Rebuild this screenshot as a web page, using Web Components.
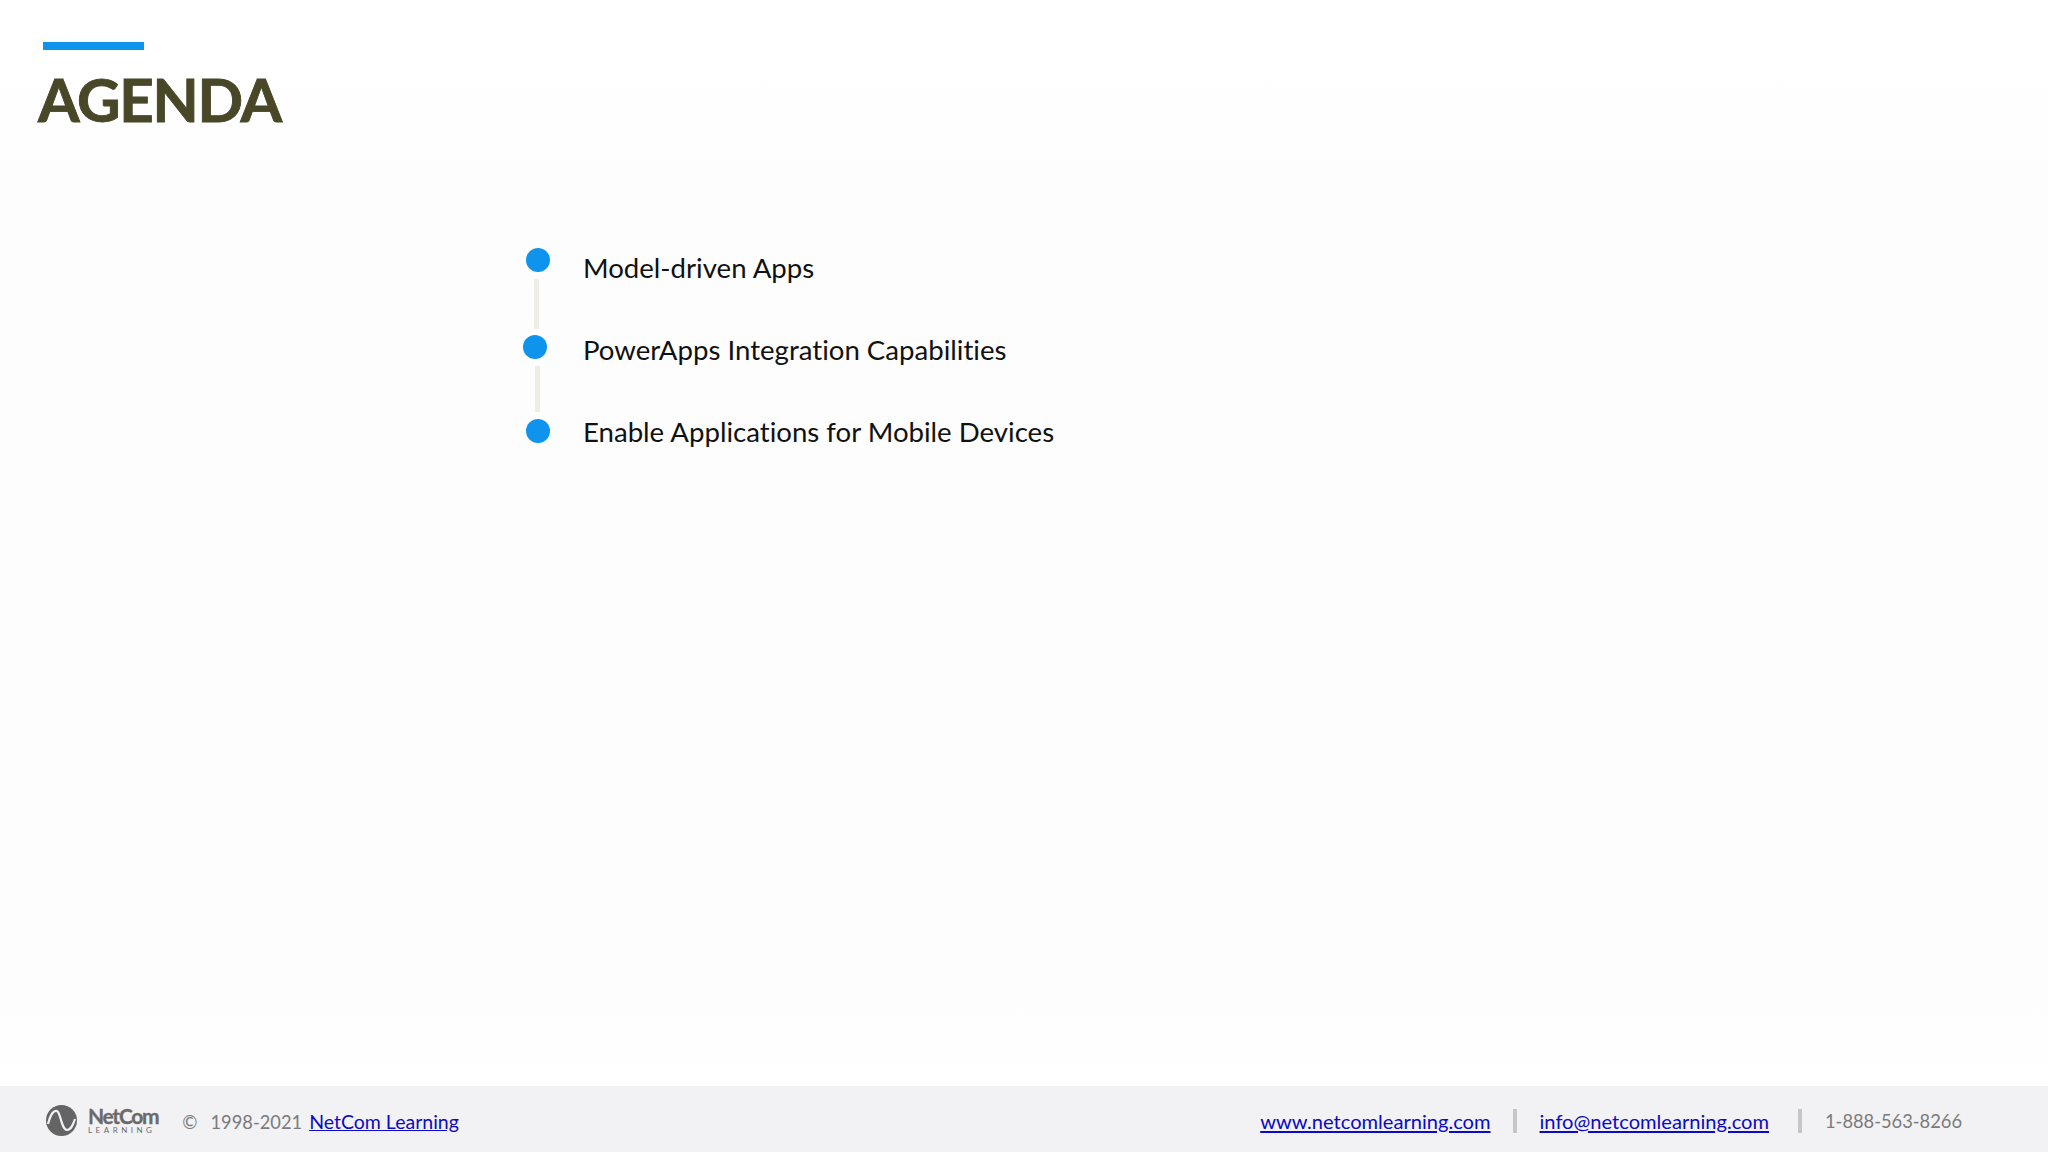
<!DOCTYPE html>
<html lang="en">
<head>
<meta charset="utf-8">
<title>Agenda</title>
<style>
  html, body { margin: 0; height: 100%; }
  body { font-family: Lato, "Liberation Sans", sans-serif; background: #fff; font-variant-ligatures: none; }
</style>
</head>
<body>
<slide-page>
  <slide-title slot="head">AGENDA</slide-title>
  <agenda-list slot="main">
    <agenda-item dot-x="-6" dot-y="0">Model-driven Apps</agenda-item>
    <agenda-item dot-x="-9" dot-y="5" line-x="2" line-top="-3" line-h="50">PowerApps Integration Capabilities</agenda-item>
    <agenda-item dot-x="-6" dot-y="7" line-x="3" line-top="2" line-h="46">Enable Applications for Mobile Devices</agenda-item>
  </agenda-list>
  <slide-footer slot="foot"></slide-footer>
</slide-page>

<script>
class SlidePage extends HTMLElement {
  constructor() {
    super();
    this.attachShadow({ mode: 'open' });
    this.shadowRoot.innerHTML = `
      <style>
        :host {
          display: flex;
          flex-direction: column;
          width: 2048px;
          height: 1152px;
          overflow: hidden;
          background: linear-gradient(#fff 60px, #fdfdfd 180px, #fdfdfd 1000px, #fff 1086px);
        }
        main {
          flex: 1;
          min-height: 0;
        }
      </style>
      <slot name="head"></slot>
      <main><slot name="main"></slot></main>
      <slot name="foot"></slot>
    `;
  }
}

class SlideTitle extends HTMLElement {
  constructor() {
    super();
    this.attachShadow({ mode: 'open' });
    this.shadowRoot.innerHTML = `
      <style>
        :host {
          display: block;
          height: 134px;
          padding: 42px 0 0 38px;
          box-sizing: border-box;
          color: #484829;
        }
        .bar {
          width: 101px;
          height: 8px;
          margin-left: 5px;
          background: #0f94ee;
        }
        h1 {
          margin: 13px 0 0;
          font: 700 60px/72px Lato, "Liberation Sans", sans-serif;
          letter-spacing: -1.3px;
          -webkit-text-stroke: 0.9px #484829;
        }
      </style>
      <div class="bar"></div>
      <h1><slot></slot></h1>
    `;
  }
}

class AgendaList extends HTMLElement {
  constructor() {
    super();
    this.attachShadow({ mode: 'open' });
    this.shadowRoot.innerHTML = `
      <style>
        :host {
          display: flex;
          flex-direction: column;
          padding: 114px 0 0 532px;
        }
      </style>
      <slot></slot>
    `;
  }
}

// one row: optional connector above, then the dot and its label
// the dots and connectors in the slide don't quite line up, hence the per-item numbers
class AgendaItem extends HTMLElement {
  connectedCallback() {
    if (this.shadowRoot) return;
    const dotX = Number(this.getAttribute('dot-x') || 0);
    const dotY = Number(this.getAttribute('dot-y') || 0);
    const lineX = this.getAttribute('line-x');
    const lineTop = Number(this.getAttribute('line-top') || 0);
    const lineH = Number(this.getAttribute('line-h') || 48);
    this.attachShadow({ mode: 'open' });
    this.shadowRoot.innerHTML = `
      <style>
        :host { display: block; }
        .line {
          width: 5px;
          height: ${lineH}px;
          margin: ${lineTop}px 0 ${48 - lineTop - lineH}px ${lineX}px;
          background: #eeeee6;
        }
        .row {
          display: flex;
          align-items: flex-start;
          height: 34px;
        }
        .dot {
          flex: none;
          width: 24px;
          height: 24px;
          margin: ${dotY}px 0 0 ${dotX}px;
          border-radius: 50%;
          background: #0f94ee;
        }
        .text {
          margin: 3px 0 0 ${51 - dotX - 24}px;
          font-size: 27.6px;
          line-height: 34px;
          color: #111;
          white-space: nowrap;
        }
      </style>
      ${lineX !== null ? '<div class="line"></div>' : ''}
      <div class="row">
        <span class="dot"></span>
        <span class="text"><slot></slot></span>
      </div>
    `;
  }
}

class SlideFooter extends HTMLElement {
  constructor() {
    super();
    this.attachShadow({ mode: 'open' });
    this.shadowRoot.innerHTML = `
      <style>
        :host {
          display: flex;
          align-items: center;
          height: 66px;
          padding: 3px 86px 0 46px;
          box-sizing: border-box;
          background: #f2f1f3;
          color: #7b7b7b;
          font-size: 18.3px;
          white-space: nowrap;
        }
        a { color: #0a0ac8; font-size: 20.1px; }
        svg { display: block; flex: none; margin-top: -1px; }
        .brand {
          display: flex;
          flex-direction: column;
          margin: 0 0 0 11px;
          color: #6a6a6a;
          line-height: 1;
        }
        .brand b { font-size: 21px; letter-spacing: -1.3px; line-height: 20px; -webkit-text-stroke: 0.3px #6a6a6a; }
        .brand span { font-size: 8px; letter-spacing: 3.5px; line-height: 9px; }
        .copy { margin: 2px 0 0 24px; }
        .year { margin: 2px 0 0 13px; }
        .owner { margin: 2px 0 0 7px; font-size: 19.5px; }
        .right { margin-left: auto; display: flex; align-items: center; }
        .sep {
          width: 4px;
          height: 24px;
          margin: 0 23px 0 22px;
          background: #c6c6c8;
        }
        .sep.wide { margin-left: 29px; }
      </style>
      <svg width="31" height="31" viewBox="0 0 31 31" aria-hidden="true">
        <circle cx="15.5" cy="15.5" r="15.5" fill="#646464"/>
        <path d="M2 19C5 8 8 5 11 6c4 2 4 18 10 19 4 0 6-5 8-11" fill="none" stroke="#f2f1f3" stroke-width="2.2"/>
      </svg>
      <div class="brand"><b>NetCom</b><span>LEARNING</span></div>
      <span class="copy">©</span>
      <span class="year">1998-2021</span>
      <a class="owner" href="#">NetCom Learning</a>
      <div class="right">
        <a href="#">www.netcomlearning.com</a>
        <span class="sep"></span>
        <a href="#">info@netcomlearning.com</a>
        <span class="sep wide"></span>
        <span>1-888-563-8266</span>
      </div>
    `;
  }
}

customElements.define('slide-page', SlidePage);
customElements.define('slide-title', SlideTitle);
customElements.define('agenda-list', AgendaList);
customElements.define('agenda-item', AgendaItem);
customElements.define('slide-footer', SlideFooter);
</script>
</body>
</html>
